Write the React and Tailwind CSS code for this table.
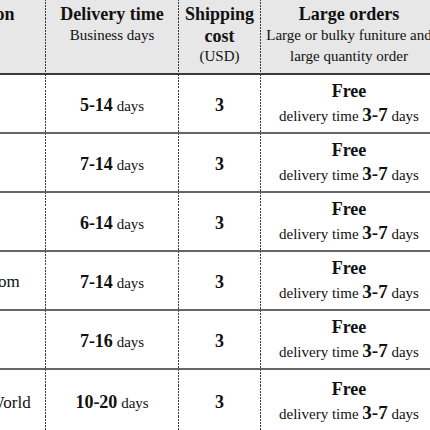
import React from "react";

const rows = [
  { dest: "USA", range: "5-14" },
  { dest: "Canada", range: "7-14" },
  { dest: "Europe", range: "6-14" },
  { dest: "United Kingdom", range: "7-14" },
  { dest: "Australia", range: "7-16" },
  { dest: "Rest of the World", range: "10-20", pad: "pl-[21px]" },
];

const cols = "grid grid-cols-[156px_133px_82px_176px]";
const vline =
  "border-r border-solid [border-image:repeating-linear-gradient(to_bottom,#3a3a3a_0px,#3a3a3a_2px,transparent_2px,transparent_3px)_1]";
const cell = `${vline} flex flex-col items-center justify-center text-center`;

export default function App() {
  return (
    <div
      className="w-[430px] h-[430px] overflow-hidden bg-white text-[#111]"
      style={{ fontFamily: '"Liberation Serif", "Times New Roman", serif' }}
    >
      <div className="ml-[-110px] w-[547px]">
        <div className={`${cols} h-[75px] bg-[#e7e7e7] border-b-2 border-[#3a3a3a]`}>
          <div className={`${cell} justify-start pt-[4px] pl-[6px]`}>
            <div className="text-[18px] font-bold leading-[21px]">Destination</div>
          </div>
          <div className={`${cell} justify-start pt-[4px]`}>
            <div className="text-[18px] font-bold leading-[21px]">Delivery time</div>
            <div className="text-[15px] leading-[20px]">Business days</div>
          </div>
          <div className={`${cell} justify-start pt-[3px]`}>
            <div className="text-[18px] font-bold leading-[22px]">Shipping</div>
            <div className="text-[18px] font-bold leading-[22px]">cost</div>
            <div className="text-[15px] leading-[19px]">(USD)</div>
          </div>
          <div className="flex flex-col items-center justify-start pt-[4px] text-center whitespace-nowrap">
            <div className="text-[18px] font-bold leading-[21px]">Large orders</div>
            <div className="text-[15px] leading-[21px]">Large or bulky funiture and</div>
            <div className="text-[15px] leading-[21px]">large quantity order</div>
          </div>
        </div>
        {rows.map((r, i) => (
          <div
            key={i}
            className={`${cols} ${i < rows.length - 1 ? "h-[59px] border-b-2 border-[#666]" : "h-[70px] pb-[8px]"}`}
          >
            <div className={`${vline} flex items-center ${r.pad || "pl-[15px]"} pt-[3px]`}>
              <span className="text-[17px] whitespace-nowrap">{r.dest}</span>
            </div>
            <div className={`${cell} pt-[3px]`}>
              <div className="whitespace-nowrap">
                <span className="text-[18px] font-bold">{r.range}</span>
                <span className="text-[15px]"> days</span>
              </div>
            </div>
            <div className={`${cell} pt-[3px]`}>
              <span className="text-[18px] font-bold">3</span>
            </div>
            <div className="flex flex-col items-center justify-center text-center whitespace-nowrap">
              <div className="text-[18px] font-bold leading-[24px]">Free</div>
              <div className="leading-[24px]">
                <span className="text-[15px]">delivery time </span>
                <span className="text-[19px] font-bold">3-7</span>
                <span className="text-[15px]"> days</span>
              </div>
            </div>
          </div>
        ))}
      </div>
    </div>
  );
}
